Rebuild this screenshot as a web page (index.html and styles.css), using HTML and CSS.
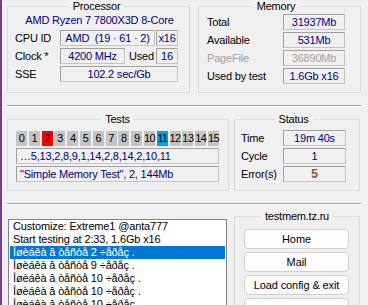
FILE: index.html
```html
<!DOCTYPE html>
<html lang="en">
<head>
    <meta charset="UTF-8">
    <meta name="viewport" content="width=device-width, initial-scale=1.0">
    <title>TestMem5</title>
    <link rel="stylesheet" href="styles.css">
</head>
<body>
    <div class="window">
        <div class="row">
            <fieldset class="group cpu">
                <legend>Processor</legend>
                <div class="cpu-name">AMD Ryzen 7 7800X3D 8-Core</div>
                <div class="line">
                    <span class="label">CPU ID</span>
                    <span class="field w-id">AMD&nbsp;&nbsp;(19 · 61 · 2)</span>
                    <span class="field w-small">x16</span>
                </div>
                <div class="line">
                    <span class="label">Clock *</span>
                    <span class="field w-clock">4200 MHz</span>
                    <span class="used">Used</span>
                    <span class="field w-small">16</span>
                </div>
                <div class="line">
                    <span class="label">SSE</span>
                    <span class="field w-fill">102.2 sec/Gb</span>
                </div>
            </fieldset>

            <fieldset class="group memory">
                <legend>Memory</legend>
                <div class="line spread">
                    <span>Total</span>
                    <span class="field w-mem">31937Mb</span>
                </div>
                <div class="line spread">
                    <span>Available</span>
                    <span class="field w-mem">531Mb</span>
                </div>
                <div class="line spread disabled">
                    <span>PageFile</span>
                    <span class="field w-mem">36890Mb</span>
                </div>
                <div class="line spread">
                    <span>Used by test</span>
                    <span class="field w-mem">1.6Gb x16</span>
                </div>
            </fieldset>
        </div>

        <div class="sep"></div>

        <div class="row middle">
            <fieldset class="group tests">
                <legend>Tests</legend>
                <div class="cells">
                    <span class="cell">0</span>
                    <span class="cell">1</span>
                    <span class="cell red">2</span>
                    <span class="cell">3</span>
                    <span class="cell">4</span>
                    <span class="cell">5</span>
                    <span class="cell">6</span>
                    <span class="cell">7</span>
                    <span class="cell">8</span>
                    <span class="cell">9</span>
                    <span class="cell">10</span>
                    <span class="cell blue">11</span>
                    <span class="cell">12</span>
                    <span class="cell">13</span>
                    <span class="cell">14</span>
                    <span class="cell">15</span>
                </div>
                <div class="field left">…5,13,2,8,9,1,14,2,8,14,2,10,11</div>
                <div class="field left gap">"Simple Memory Test", 2, 144Mb</div>
            </fieldset>

            <fieldset class="group status">
                <legend>Status</legend>
                <div class="line spread">
                    <span>Time</span>
                    <span class="field w-stat">19m 40s</span>
                </div>
                <div class="line spread">
                    <span>Cycle</span>
                    <span class="field w-stat">1</span>
                </div>
                <div class="line spread">
                    <span>Error(s)</span>
                    <span class="field w-stat errors">5</span>
                </div>
            </fieldset>
        </div>

        <div class="sep"></div>

        <div class="row bottom">
            <div class="log">
                <div class="log-row">Customize: Extreme1 @anta777</div>
                <div class="log-row">Start testing at 2:33, 1.6Gb x16</div>
                <div class="log-row selected">Îøèáêà â òåñòå 2 ÷åðåç .</div>
                <div class="log-row">Îøèáêà â òåñòå 9 ÷åðåç .</div>
                <div class="log-row">Îøèáêà â òåñòå 10 ÷åðåç .</div>
                <div class="log-row">Îøèáêà â òåñòå 10 ÷åðåç .</div>
                <div class="log-row">Îøèáêà â òåñòå 10 ÷åðåç .</div>
            </div>

            <fieldset class="group links">
                <legend>testmem.tz.ru</legend>
                <button class="btn">Home</button>
                <button class="btn">Mail</button>
                <button class="btn">Load config &amp; exit</button>
                <button class="btn"></button>
            </fieldset>
        </div>
    </div>
</body>
</html>
```

FILE: styles.css
```css
body {
    margin: 0;
    background-color: #f0f0f0;
    font-family: "Liberation Sans", Arial, sans-serif;
    font-size: 11px;
    color: #000;
}

.window {
    width: 368px;
    height: 305px;
    box-sizing: border-box;
    border-left: 2px solid #713f90;
    padding: 0 7px 0 5px;
    overflow: hidden;
    letter-spacing: -0.2px;
}

.row {
    display: flex;
    align-items: stretch;
}

.group {
    margin: 0;
    border: 1px solid #dcdcdc;
    box-sizing: border-box;
    min-width: 0;
}

.group legend {
    margin: 0 auto;
    padding: 0 4px;
    line-height: 12px;
}

/* processor / memory */
.cpu {
    width: 183px;
    padding: 2px 11px 8px 7px;
}

.memory {
    width: 163px;
    margin-left: 8px;
    padding: 0 15px 8px 8px;
}

.cpu-name {
    color: #000080;
    line-height: 13px;
    text-align: center;
    padding-left: 6px;
    margin-bottom: 3px;
}

.line {
    display: flex;
    align-items: center;
    height: 16px;
    margin-top: 2px;
}

.spread {
    justify-content: space-between;
}

.label {
    width: 45px;
}

.used {
    margin-left: 4px;
}

.field {
    display: block;
    box-sizing: border-box;
    height: 16px;
    line-height: 14px;
    border: 1px solid;
    border-color: #a0a0a0 #c4c4c4 #c4c4c4 #a0a0a0;
    color: #000080;
    text-align: center;
    white-space: nowrap;
    overflow: hidden;
}

.w-id { width: 95px; }
.w-clock { width: 65px; }
.w-small { width: 22px; margin-left: auto; }
.w-fill { flex: 1; }
.w-mem { width: 62px; }
.w-stat { width: 63px; }

.disabled,
.disabled .field {
    color: #a0a0a0;
}

.sep {
    height: 1px;
    background-color: #a0a0a0;
    border-bottom: 1px solid #fff;
    margin-top: 12px;
}

/* tests / status */
.middle {
    margin-top: 6px;
}

.tests {
    width: 222px;
    padding: 6px 9px 8px 8px;
}

.status {
    width: 126px;
    margin-left: 5px;
    padding: 3px 13px 8px 6px;
}

.cells {
    display: flex;
    justify-content: space-between;
    height: 15px;
    margin-bottom: 2px;
}

.cell {
    width: 11px;
    background-color: #c4c4c4;
    line-height: 15px;
    text-align: center;
    letter-spacing: -0.6px;
    white-space: nowrap;
}

.cell.red { background-color: #ff0000; }
.cell.blue { background-color: #00a2e8; }

.left {
    text-align: left;
    padding-left: 3px;
}

.gap {
    margin-top: 2px;
}

.errors {
    color: #a0501e;
    font-weight: bold;
    font-size: 12px;
}

/* log + links */
.bottom {
    margin-top: 5px;
    align-items: flex-start;
}

.log {
    width: 219px;
    height: 100px;
    margin: 9px 0 0 1px;
    padding: 0 1px;
    box-sizing: border-box;
    background-color: #fff;
    border: 1px solid #828282;
    letter-spacing: -0.15px;
}

.log-row {
    height: 13px;
    line-height: 13px;
    padding-left: 3px;
    white-space: nowrap;
}

.log-row.selected {
    background-color: #0078d7;
    color: #fff;
}

.links {
    width: 126px;
    height: 120px;
    margin-left: 7px;
    padding: 7px 9px 0 9px;
}

.btn {
    display: block;
    width: 105px;
    height: 20px;
    margin-bottom: 3px;
    padding: 0;
    background-color: #fdfdfd;
    border: 1px solid #d0d0d0;
    border-radius: 4px;
    font-family: "Liberation Sans", Arial, sans-serif;
    font-size: 11px;
    letter-spacing: -0.1px;
    color: #000;
}
```
